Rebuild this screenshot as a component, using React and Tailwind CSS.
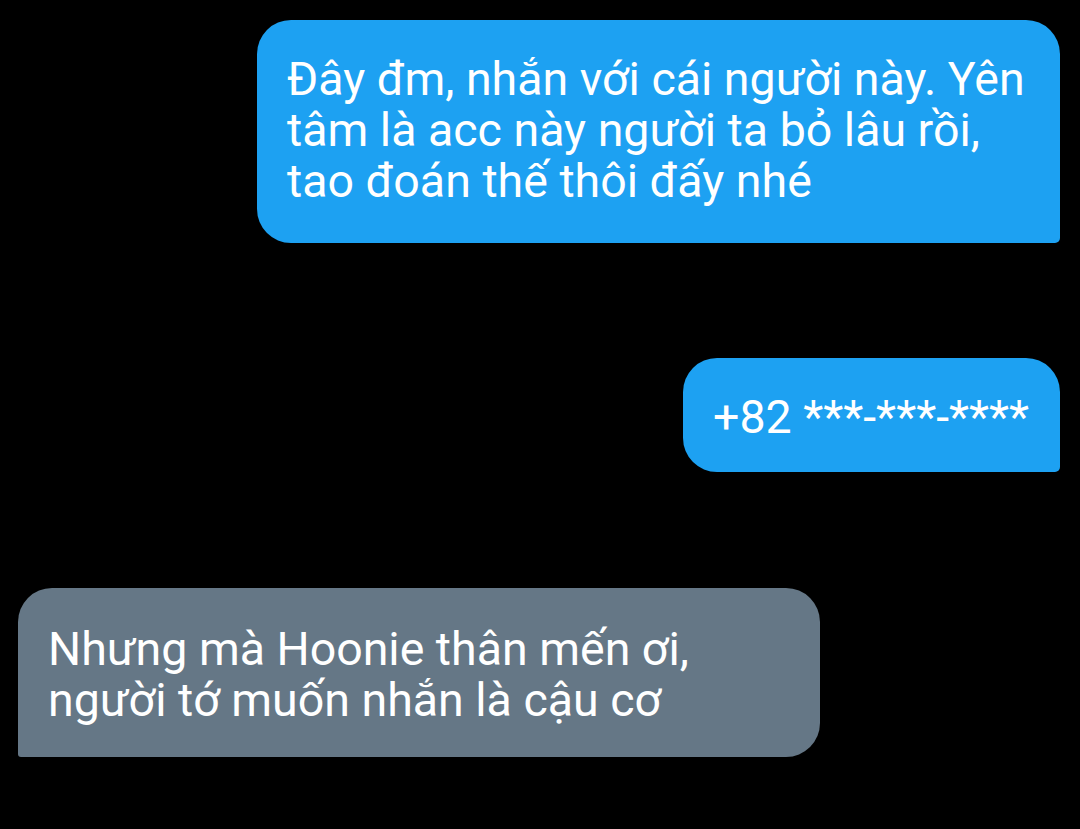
import React from 'react';

const messages = [
  {
    id: 1,
    mine: true,
    lines: ['Đây đm, nhắn với cái người này. Yên', 'tâm là acc này người ta bỏ lâu rồi,', 'tao đoán thế thôi đấy nhé'],
  },
  {
    id: 2,
    mine: true,
    lines: ['+82 ***-***-****'],
  },
  {
    id: 3,
    mine: false,
    lines: ['Nhưng mà Hoonie thân mến ơi,', 'người tớ muốn nhắn là cậu cơ'],
  },
];

const Bubble = ({ mine, lines, className }) => (
  <div
    className={
      mine
        ? `bg-[#1da1f2] rounded-[34px] rounded-br-[5px] text-white ${className}`
        : `bg-[#657786] rounded-[34px] rounded-bl-[3px] text-white ${className}`
    }
  >
    {lines.map((line, i) => (
      <div key={i} className="whitespace-nowrap">{line}</div>
    ))}
  </div>
);

export default function App() {
  return (
    <div
      className="w-[1080px] h-[829px] bg-black flex flex-col text-[46.5px] leading-[51px]"
      style={{ fontFamily: 'Roboto, "Noto Sans", sans-serif' }}
    >
      <Bubble {...messages[0]} className="mt-[20px] ml-[257px] w-[803px] h-[223px] pl-[30px] pt-[34px]" />
      <Bubble {...messages[1]} className="mt-[115px] ml-[683px] w-[377px] h-[114px] pl-[30px] pt-[34px]" />
      <Bubble {...messages[2]} className="mt-[116px] ml-[18px] w-[802px] h-[169px] pl-[30px] pt-[36px]" />
    </div>
  );
}
